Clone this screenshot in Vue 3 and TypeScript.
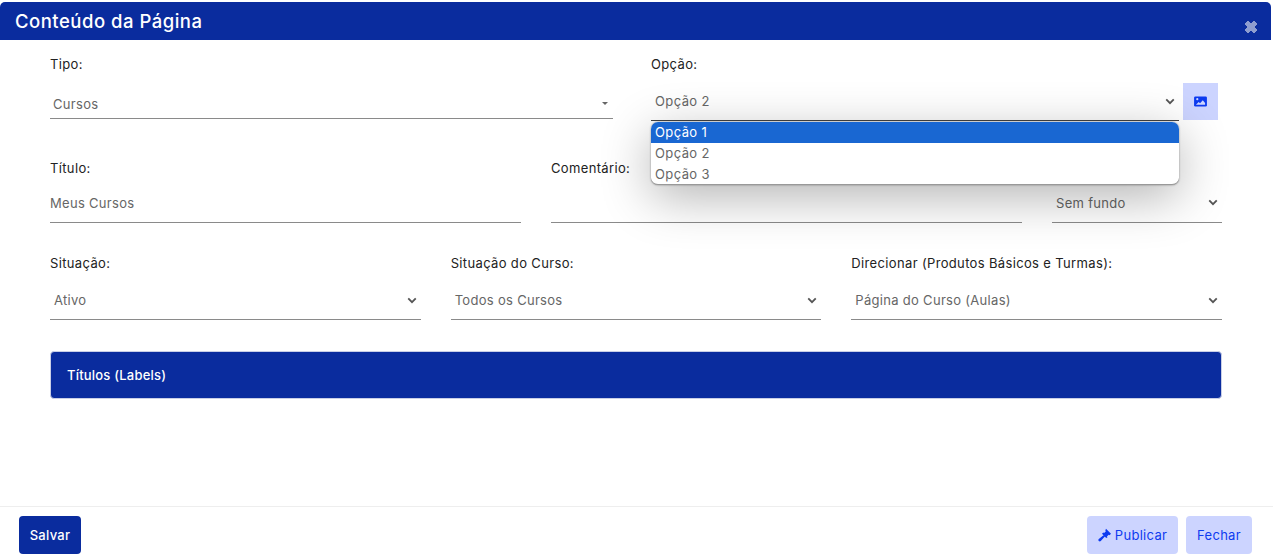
<script setup lang="ts">
const options: string[] = ['Opção 1', 'Opção 2', 'Opção 3']
const situacoes: string[][] = [
  ['Situação:', 'Ativo'],
  ['Situação do Curso:', 'Todos os Cursos'],
  ['Direcionar (Produtos Básicos e Turmas):', 'Página do Curso (Aulas)'],
]
</script>

<template>
  <div class="page">
    <header class="head">
      <h1>Conteúdo da Página</h1>
      <svg class="close" viewBox="0 0 14 14" width="14" height="14"><path d="M1 4 4 1l3 3 3-3 3 3-3 3 3 3-3 3-3-3-3 3-3-3 3-3z" fill="#8e9dcf" stroke="#8e9dcf" stroke-width="1" stroke-linejoin="round"/></svg>
    </header>

    <main class="body">
      <div class="row r1">
        <div class="field tipo">
          <label>Tipo:</label>
          <div class="ctl tipo-ctl"><span>Cursos</span><i class="caret"></i></div>
        </div>
        <div class="field opcao">
          <label>Opção:</label>
          <div class="opcao-line">
            <div class="ctl opcao-ctl">
              <span>Opção 2</span>
              <svg class="chev" viewBox="0 0 12 8" width="10" height="7"><path d="M1.5 1.5 6 6l4.500-4.500" fill="none" stroke="#555" stroke-width="2.200"/></svg>
              <ul class="menu">
                <li v-for="(o, i) in options" :key="o" :class="{ on: i === 0 }">{{ o }}</li>
              </ul>
            </div>
            <button class="img-btn" type="button">
              <svg viewBox="0 0 14 12" width="13" height="11"><rect width="14" height="11" y=".5" rx="1.500" fill="#0d3bf0"/><circle cx="3.500" cy="3.500" r="1.200" fill="#cdd5ff"/><path d="M2 9.500 5 6.500l1.500 1.500L9.500 4.500 12 7.500v2z" fill="#cdd5ff"/></svg>
            </button>
          </div>
        </div>
      </div>

      <div class="row r2">
        <div class="field grow">
          <label>Título:</label>
          <div class="ctl"><span>Meus Cursos</span></div>
        </div>
        <div class="field grow">
          <label>Comentário:</label>
          <div class="ctl"></div>
        </div>
        <div class="field fundo">
          <label>&nbsp;</label>
          <div class="ctl pad">
            <span>Sem fundo</span>
            <svg class="chev" viewBox="0 0 12 8" width="10" height="7"><path d="M1.5 1.5 6 6l4.500-4.500" fill="none" stroke="#555" stroke-width="2.200"/></svg>
          </div>
        </div>
      </div>

      <div class="row r3">
        <div class="field grow" v-for="f in situacoes" :key="f[0]">
          <label>{{ f[0] }}</label>
          <div class="ctl pad">
            <span>{{ f[1] }}</span>
            <svg class="chev" viewBox="0 0 12 8" width="10" height="7"><path d="M1.5 1.5 6 6l4.500-4.500" fill="none" stroke="#555" stroke-width="2.200"/></svg>
          </div>
        </div>
      </div>

      <section class="panel">Títulos (Labels)</section>
    </main>

    <footer class="foot">
      <button class="btn primary" type="button">Salvar</button>
      <div class="right">
        <button class="btn soft pub" type="button">
          <svg viewBox="0 0 14 14" width="14" height="14"><path d="M8 .8l5 5-1.500 1.500-.8-.6-1.800 1.800.6.800L8.200 10 4 5.800l1.300-1.300.8.600 1.800-1.800-.6-.8zM5.500 7.200l1.300 1.300-4 4.500c-.6.600-1.400.600-2 0s-.6-1.300 0-1.900z" fill="#0d3bf0"/></svg>
          Publicar
        </button>
        <button class="btn soft fech" type="button">Fechar</button>
      </div>
    </footer>
  </div>
</template>

<style>
html, body { margin: 0; background: #fff; }
</style>

<style scoped>
.page {
  width: 1273px;
  height: 560px;
  display: flex;
  flex-direction: column;
  box-sizing: border-box;
  padding-top: 2px;
  font-family: "Inter", "Liberation Sans", sans-serif;
  font-size: 13px;
  color: #212529;
  overflow: hidden;
}
.head {
  height: 38px;
  flex: none;
  background: #0a2c9e;
  border-radius: 5px 5px 0 0;
  display: flex;
  align-items: flex-start;
  justify-content: space-between;
  padding: 0 15px;
  margin-right: 2px;
  box-sizing: border-box;
}
.head h1 {
  margin: 0;
  font-size: 18.500px;
  line-height: 38px;
  font-weight: 500;
  color: #fff;
  letter-spacing: .5px;
}
.close { margin: 18px -2px 0 0; }
.body {
  flex: 1;
  padding: 0 51px 0 50px;
  min-height: 0;
}
.row { display: flex; }
.field { display: flex; flex-direction: column; min-width: 0; }
.field label {
  font-size: 13px;
  line-height: 20px;
  color: #222;
  display: block;
  letter-spacing: .35px;
}
.r1 { padding-top: 14px; height: 118px; box-sizing: border-box; }
.tipo { width: 563px; margin-right: 38px; }
.opcao { width: 567px; }
.ctl {
  box-sizing: border-box;
  display: flex;
  align-items: center;
  justify-content: space-between;
  border-bottom: 1px solid #8a8a8a;
  color: #666;
  font-size: 13px;
  letter-spacing: .3px;
}
.tipo-ctl { height: 35px; margin-top: 10px; padding: 5px 5px 0 3px; }
.caret {
  width: 0;
  height: 0;
  border-left: 3px solid transparent;
  border-right: 3px solid transparent;
  border-top: 3px solid #666;
}
.opcao-line { display: flex; align-items: flex-start; gap: 4px; margin-top: 9px; }
.opcao-ctl {
  position: relative;
  width: 528px;
  height: 38px;
  padding: 0 4px 1px 4px;
  border-bottom-color: #444;
  letter-spacing: .4px;
  z-index: 2;
}
.chev { flex: none; }
.img-btn {
  width: 35px;
  height: 37px;
  border: 0;
  padding: 0;
  background: #ccd4ff;
  display: flex;
  align-items: center;
  justify-content: center;
}
.menu {
  position: absolute;
  left: 0;
  top: 39px;
  width: 528px;
  height: 63px;
  margin: 0;
  padding: 0;
  list-style: none;
  background: #fff;
  border-radius: 7px;
  overflow: hidden;
  box-sizing: border-box;
  border-bottom: 1px solid #999;
  box-shadow: 0 12px 50px rgba(0, 0, 0, .3), 0 0 2px rgba(0, 0, 0, .45);
}
.menu li {
  height: 21px;
  line-height: 20px;
  padding-left: 4px;
  color: #666;
  font-size: 13px;
}
.menu li.on { background: #1967d2; color: #fff; }
.r2 { gap: 30px; height: 95px; }
.grow { flex: 1 1 0; }
.fundo { width: 170px; flex: none; }
.pad { padding-left: 4px; padding-right: 4px; }
.r2 .ctl { height: 45px; padding-top: 8px; padding-bottom: 3px; }
.r3 { gap: 30px; height: 98px; }
.r3 .ctl { height: 47px; padding-top: 11px; padding-bottom: 3px; }
.panel {
  box-sizing: border-box;
  height: 48px;
  background: #0a2c9e;
  border: 1px solid #c9cfe6;
  border-radius: 4px;
  color: #fff;
  font-size: 13px;
  font-weight: 500;
  line-height: 46px;
  padding-left: 16px;
  letter-spacing: .2px;
}
.foot {
  flex: none;
  height: 54px;
  box-sizing: border-box;
  border-top: 1px solid #eee;
  padding: 9px 21px 7px 19px;
  display: flex;
  justify-content: space-between;
  align-items: flex-start;
}
.right { display: flex; gap: 8px; }
.btn {
  height: 38px;
  border: 0;
  border-radius: 4px;
  font-family: inherit;
  font-size: 13px;
  padding: 0;
  display: inline-flex;
  align-items: center;
  justify-content: center;
  gap: 3px;
  letter-spacing: .3px;
}
.primary { width: 62px; background: #0a2c9e; color: #fff; font-weight: 500; }
.soft { background: #ccd4ff; color: #0d3bf0; font-weight: 400; }
.pub { width: 91px; }
.fech { width: 66px; }
</style>
